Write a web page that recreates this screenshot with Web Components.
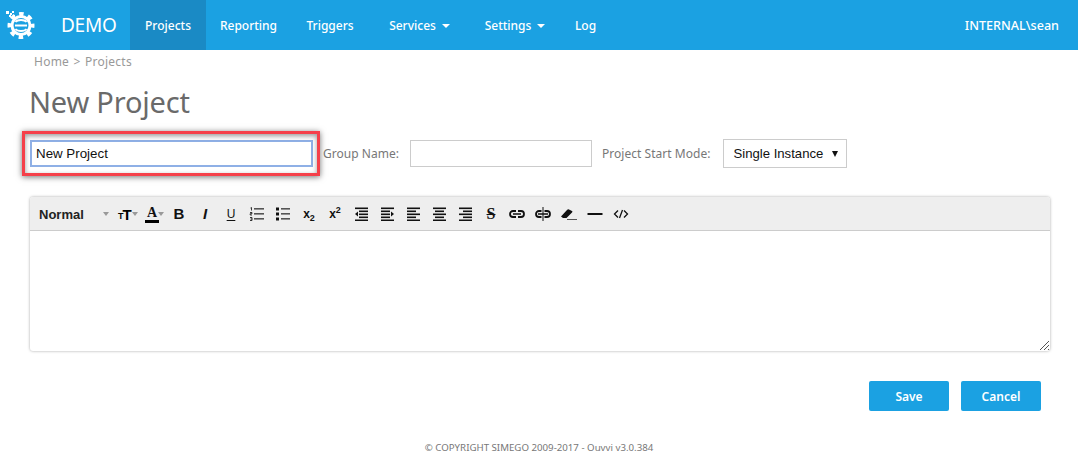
<!DOCTYPE html>
<html>
<head>
<meta charset="utf-8">
<title>New Project</title>
<style>
	html, body { margin: 0; padding: 0; background: #fff; }
	body { font-family: 'Noto Sans', 'Open Sans', sans-serif; font-size: 13px; color: #6a6a6a; width: 1078px; height: 476px; overflow: hidden; }
</style>
</head>
<body>
<app-header brand="DEMO" user="INTERNAL\sean">
	<nav-item active width="76">Projects</nav-item>
	<nav-item width="85">Reporting</nav-item>
	<nav-item width="78">Triggers</nav-item>
	<nav-item width="101" caret>Services</nav-item>
	<nav-item width="90" caret>Settings</nav-item>
	<nav-item width="51">Log</nav-item>
</app-header>
<project-page></project-page>

<script>
// ==========
// Helper.
// ==========

const define = (name, markup, init) => {
	const template = document.createElement('template');
	template.innerHTML = markup;

	customElements.define(name, class extends HTMLElement {
		constructor() {
			super();
			this.attachShadow({ mode: 'open' });
			this.shadowRoot.appendChild(template.content.cloneNode(true));
		}

		connectedCallback() {
			if (init) {
				init(this);
			}
		}
	});
};

// ===========
// Nav item.
// ===========

define('nav-item', `
	<style>
		:host { display: flex; align-items: center; justify-content: center; height: 50px; color: #fff; font-size: 12px; font-weight: 500; }
		:host([active]) { background: #1a8ac5; }
		.caret { display: none; width: 0; height: 0; margin-left: 6px; margin-top: 1px; border: 4px solid transparent; border-top-color: #fff; border-bottom: 0; }
		:host([caret]) .caret { display: block; }
	</style>
	<slot></slot><span class="caret"></span>
`, (el) => {
	el.style.width = el.getAttribute('width') + 'px';
});

// =======
// Header.
// =======

define('app-header', `
	<style>
		:host { display: flex; align-items: center; height: 50px; background: #1ba1e2; color: #fff; }
		svg { display: block; width: 40px; height: 50px; flex: none; }
		.brand { width: 69px; margin-left: 21px; font-size: 19px; letter-spacing: -0.25px; flex: none; }
		nav { display: flex; }
		.user { margin-left: auto; margin-right: 19px; font-size: 12.600px; font-weight: 500; }
	</style>
	<svg viewBox="0 0 40 50" fill="none">
		<circle cx="21" cy="25.500" r="9" stroke="#fff" stroke-width="3"/>
		<circle cx="21" cy="25.500" r="11.500" stroke="#fff" stroke-width="4" stroke-dasharray="4.500 4.532" stroke-dashoffset="2.250"/>
		<path d="M26.500 22q-1.500-2-5.500-2t-5.500 2M15.500 29q1.500 2 5.500 2t5.500-2" stroke="#fff" stroke-width="1.800"/>
		<path d="M15 25.500h12" stroke="#fff" stroke-width="2"/>
		<path d="M6 11h3v3H6zM10 13h2v2h-2zM12 11h2v2h-2zM9 15h2v2H9zM13 15h2v2h-2z" fill="#fff"/>
	</svg>
	<span class="brand" id="brand"></span>
	<nav><slot></slot></nav>
	<span class="user" id="user"></span>
`, (el) => {
	el.shadowRoot.getElementById('brand').textContent = el.getAttribute('brand');
	el.shadowRoot.getElementById('user').textContent = el.getAttribute('user');
});

// ==============
// Editor toolbar.
// ==============

const lines = (rows) => rows.map(([x, y, w]) => `<rect x="${x}" y="${y}" width="${w}" height="1.600"/>`).join('');

const ICONS = {
	ol: `<svg viewBox="0 0 16 14"><path d="M1.500 1 2.500 .5v3M1 5.500h2v1.200H1.200v1.300H3M1 10.500h2v3H1M1.500 12h1.500" fill="none" stroke="#222" stroke-width="0.900"/><g fill="#555">${lines([[5, 1, 10], [5, 6, 10], [5, 11, 10]])}</g></svg>`,
	ul: `<svg viewBox="0 0 16 14"><g fill="#111"><rect x="1" y="0.500" width="3" height="3"/><rect x="1" y="5.500" width="3" height="3"/><rect x="1" y="10.500" width="3" height="3"/></g><g fill="#555">${lines([[6, 1, 9], [6, 6, 9], [6, 11, 9]])}</g></svg>`,
	outdent: `<svg viewBox="0 0 15 14"><g fill="#111">${lines([[1, 0.500, 13], [5, 3.500, 9], [5, 6.500, 9], [5, 9.500, 9], [1, 12.500, 13]])}<path d="M4 4.500v5L1 7z"/></g></svg>`,
	indent: `<svg viewBox="0 0 15 14"><g fill="#111">${lines([[1, 0.500, 13], [1, 3.500, 9], [1, 6.500, 9], [1, 9.500, 9], [1, 12.500, 13]])}<path d="M11 4.500v5L14 7z"/></g></svg>`,
	left: `<svg viewBox="0 0 15 14"><g fill="#111">${lines([[1, 0.500, 13], [1, 3.500, 9], [1, 6.500, 13], [1, 9.500, 9], [1, 12.500, 13]])}</g></svg>`,
	center: `<svg viewBox="0 0 15 14"><g fill="#111">${lines([[1, 0.500, 13], [3, 3.500, 9], [1, 6.500, 13], [3, 9.500, 9], [1, 12.500, 13]])}</g></svg>`,
	right: `<svg viewBox="0 0 15 14"><g fill="#111">${lines([[1, 0.500, 13], [5, 3.500, 9], [1, 6.500, 13], [5, 9.500, 9], [1, 12.500, 13]])}</g></svg>`,
	link: `<svg viewBox="0 0 18 14"><g fill="none" stroke="#111" stroke-width="1.800"><path d="M8 4H5a3 3 0 0 0 0 6h3M10 4h3a3 3 0 0 1 0 6h-3"/><path d="M5 7h8" stroke-width="1.400"/></g></svg>`,
	unlink: `<svg viewBox="0 0 18 14"><g fill="none" stroke="#111" stroke-width="1.800"><path d="M7.500 4H5a3 3 0 0 0 0 6h2.500M10.500 4H13a3 3 0 0 1 0 6h-2.500"/><path d="M4 7h10" stroke-width="1.400"/></g><path d="M9 0v14" stroke="#111" stroke-width="1"/></svg>`,
	eraser: `<svg viewBox="0 0 18 14"><path d="M1 9.500 7 3q1-1 2-.500l3 1.500q1 .7 0 1.500L6.500 11H3z" fill="#111"/><path d="M7 12.500h10" stroke="#555" stroke-width="1.200"/></svg>`,
	hr: `<svg viewBox="0 0 16 14"><rect x="0.500" y="6" width="15" height="2" fill="#111"/></svg>`,
	code: `<svg viewBox="0 0 16 14"><path d="M5 3.500 1.500 7 5 10.500M11 3.500 14.500 7 11 10.500M9.500 3l-3 8" fill="none" stroke="#111" stroke-width="1.300"/></svg>`
};

define('editor-toolbar', `
	<style>
		:host { display: flex; align-items: center; height: 33px; background: #eee; border-bottom: 1px solid #ccc; color: #111; font-family: 'Liberation Sans', sans-serif; }
		.normal { box-sizing: border-box; width: 68px; padding: 1px 0 0 9px; font-size: 13px; font-weight: 700; color: #222; flex: none; }
		.drop { width: 0; height: 0; border: 3px solid transparent; border-top: 4px solid #999; border-bottom: 0; flex: none; }
		.size { display: flex; align-items: flex-end; margin: 3px 0 0 9px; width: 23px; flex: none; line-height: 14px; font-weight: 700; color: #000; }
		.size b { font-size: 9px; margin-right: -1px; line-height: 12px; }
		.size i { font-style: normal; font-size: 15px; }
		.color { display: flex; flex-direction: column; align-items: center; width: 18px; margin: 2px 0 0 5px; flex: none; font-family: 'Liberation Serif', serif; font-weight: 700; font-size: 14px; line-height: 12px; }
		.color u { display: block; width: 14px; height: 3px; background: #000; margin-top: 1px; }
		.tools { display: flex; margin-left: 2px; }
		.tool { display: flex; align-items: center; justify-content: center; width: 26px; height: 20px; flex: none; font-size: 14px; }
		.tool svg { display: block; height: 14px; width: auto; }
		.b { font-weight: 900; font-size: 15px; }
		.i { font-family: 'Liberation Sans', sans-serif; font-style: italic; font-weight: 700; font-size: 15px; }
		.u { font-size: 12px; text-decoration: underline; text-underline-offset: 2px; }
		.x > span { display: block; font-weight: 700; font-size: 12px; line-height: 14px; }
		sub, sup { font-size: 9px; line-height: 0; }
		.s { font-family: 'Liberation Serif', serif; font-weight: 700; font-size: 16px; text-decoration: line-through; }
	</style>
	<span class="normal">Normal</span>
	<span class="drop" style="margin-left:5px"></span>
	<span class="size"><b>T</b><i>T</i></span>
	<span class="drop" style="margin-left:-9px"></span>
	<span class="color">A<u></u></span>
	<span class="drop" style="margin-left:-3px"></span>
	<div class="tools" id="tools">
		<span class="tool b">B</span>
		<span class="tool i">I</span>
		<span class="tool u">U</span>
		<span class="tool" data-icon="ol"></span>
		<span class="tool" data-icon="ul"></span>
		<span class="tool x"><span>x<sub>2</sub></span></span>
		<span class="tool x"><span>x<sup>2</sup></span></span>
		<span class="tool" data-icon="outdent"></span>
		<span class="tool" data-icon="indent"></span>
		<span class="tool" data-icon="left"></span>
		<span class="tool" data-icon="center"></span>
		<span class="tool" data-icon="right"></span>
		<span class="tool s">S</span>
		<span class="tool" data-icon="link"></span>
		<span class="tool" data-icon="unlink"></span>
		<span class="tool" data-icon="eraser"></span>
		<span class="tool" data-icon="hr"></span>
		<span class="tool" data-icon="code"></span>
	</div>
`, (el) => {
	el.shadowRoot.querySelectorAll('[data-icon]').forEach((tool) => {
		tool.innerHTML = ICONS[tool.dataset.icon];
	});
});

// ======
// Editor.
// ======

define('rich-editor', `
	<style>
		:host { display: flex; flex-direction: column; height: 154px; margin: 29px 28px 0 30px; border-radius: 3px; background: #fff; box-shadow: 0 0 3px rgba(0,0,0,.35); position: relative; overflow: hidden; }
		.body { flex: 1; }
		svg { position: absolute; right: 1px; bottom: 1px; width: 9px; height: 9px; }
	</style>
	<editor-toolbar></editor-toolbar>
	<div class="body"></div>
	<svg viewBox="0 0 9 9"><path d="M0 9 9 0M4 9l5-5M8 9l1-1" stroke="#555" stroke-width="1"/></svg>
`);

// =====
// Page.
// =====

define('project-page', `
	<style>
		:host { display: block; }
		.crumb { padding: 4px 0 0 34px; font-size: 12px; line-height: 16px; color: #999; word-spacing: 1px; letter-spacing: 0.25px; }
		h1 { margin: 11px 0 0 29px; font-size: 29px; line-height: 42px; font-weight: 400; color: #6a6a6a; letter-spacing: -0.2px; }
		.form { display: flex; align-items: center; margin: 16px 0 0 30px; height: 29px; position: relative; }
		input { box-sizing: border-box; height: 27px; margin: 0; border: 1px solid #ccc; background: #fff; outline: 0; border-radius: 0; }
		.name { width: 283px; padding: 0 4px; border: 2px solid #8fb0e6; font-family: 'Liberation Sans', sans-serif; font-size: 13.330px; color: #111; }
		.group { width: 182px; margin: 0 10px 0 11px; }
		label { font-size: 12px; color: #777; letter-spacing: 0.03px; }
		.lab-group { margin-left: 10px; }
		.select { box-sizing: border-box; display: flex; align-items: center; width: 124px; height: 29px; margin-left: 13px; padding: 0 9px; border: 1px solid #ccc; font-family: 'Liberation Sans', sans-serif; font-size: 13.150px; color: #111; }
		.select i { margin-left: auto; width: 0; height: 0; border: 3px solid transparent; border-top: 6px solid #111; border-bottom: 0; margin-right: -1px; }
		.callout { position: absolute; left: -8px; top: -8px; width: 298px; height: 45px; box-sizing: border-box; border: 3px solid #f5404a; box-shadow: 0 1px 6px rgba(0,0,0,.55), inset 0 2px 5px rgba(0,0,0,.4); pointer-events: none; }
		.actions { display: flex; justify-content: flex-end; gap: 12px; margin: 30px 37px 0 0; }
		.btn { display: flex; align-items: center; justify-content: center; width: 80px; height: 30px; border-radius: 2px; background: #1ba1e2; color: #fff; font-size: 12px; font-weight: 600; }
		footer { margin-top: 30px; text-align: center; font-size: 9.700px; line-height: 14px; color: #777; }
	</style>
	<div class="crumb">Home &gt; Projects</div>
	<h1>New Project</h1>
	<div class="form">
		<input class="name" value="New Project">
		<label class="lab-group">Group Name:</label>
		<input class="group">
		<label>Project Start Mode:</label>
		<div class="select">Single Instance<i></i></div>
		<div class="callout"></div>
	</div>
	<rich-editor></rich-editor>
	<div class="actions">
		<div class="btn">Save</div>
		<div class="btn">Cancel</div>
	</div>
	<footer>© COPYRIGHT SIMEGO 2009-2017 - Ouvvi v3.0.384</footer>
`);
</script>
</body>
</html>
